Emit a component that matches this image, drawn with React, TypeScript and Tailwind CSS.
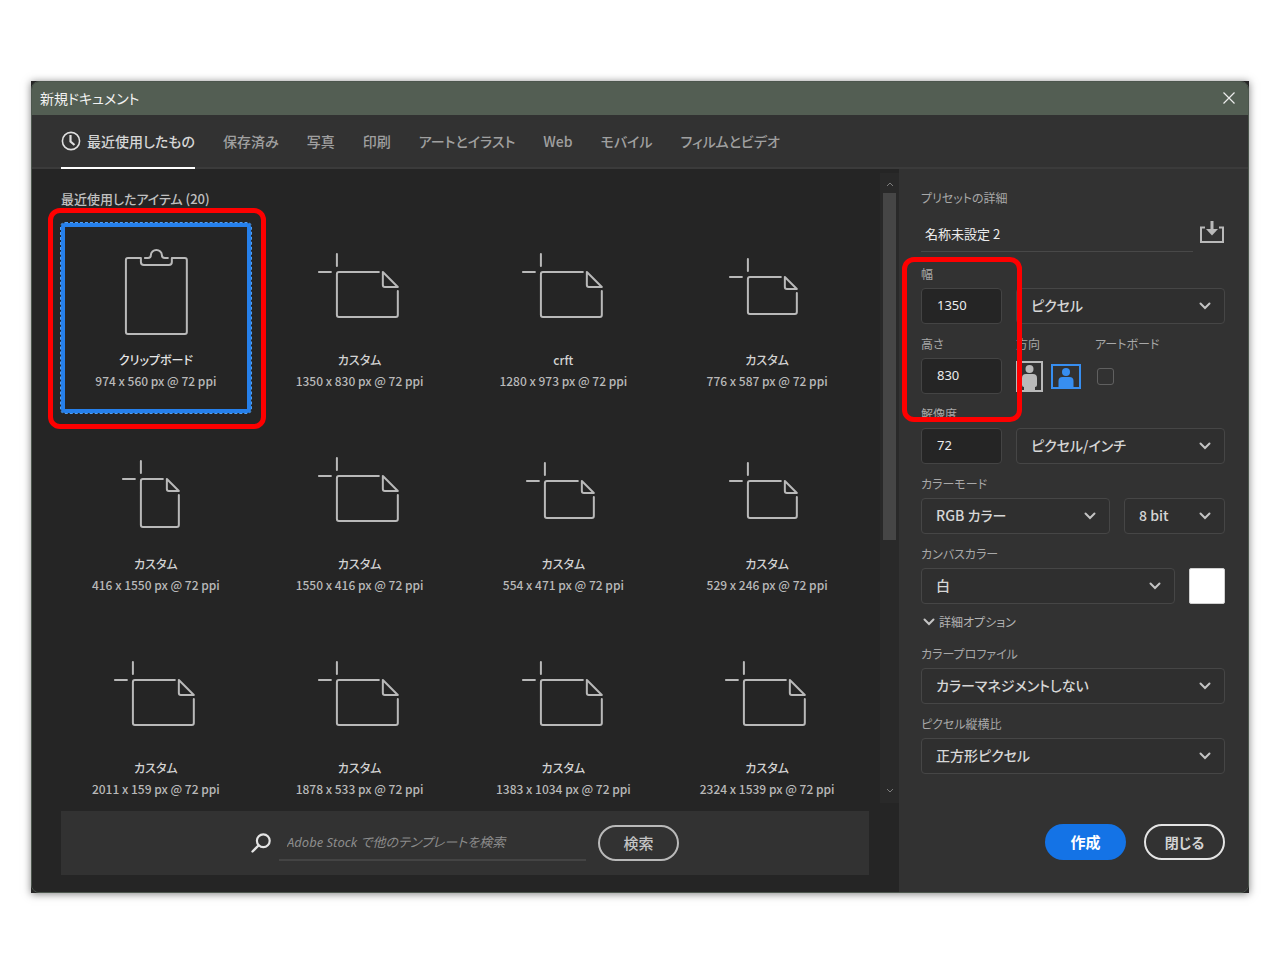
import { useState } from "react";
import type { ReactNode } from "react";

type IconKind = "clipboard" | "landscape" | "small" | "portrait";

interface Preset {
  name: string;
  size: string;
  icon: IconKind;
}

const presets: Preset[] = [
  { name: "クリップボード", size: "974 x 560 px @ 72 ppi", icon: "clipboard" },
  { name: "カスタム", size: "1350 x 830 px @ 72 ppi", icon: "landscape" },
  { name: "crft", size: "1280 x 973 px @ 72 ppi", icon: "landscape" },
  { name: "カスタム", size: "776 x 587 px @ 72 ppi", icon: "small" },
  { name: "カスタム", size: "416 x 1550 px @ 72 ppi", icon: "portrait" },
  { name: "カスタム", size: "1550 x 416 px @ 72 ppi", icon: "landscape" },
  { name: "カスタム", size: "554 x 471 px @ 72 ppi", icon: "small" },
  { name: "カスタム", size: "529 x 246 px @ 72 ppi", icon: "small" },
  { name: "カスタム", size: "2011 x 159 px @ 72 ppi", icon: "landscape" },
  { name: "カスタム", size: "1878 x 533 px @ 72 ppi", icon: "landscape" },
  { name: "カスタム", size: "1383 x 1034 px @ 72 ppi", icon: "landscape" },
  { name: "カスタム", size: "2324 x 1539 px @ 72 ppi", icon: "landscape" },
];

const tabs = [
  "最近使用したもの",
  "保存済み",
  "写真",
  "印刷",
  "アートとイラスト",
  "Web",
  "モバイル",
  "フィルムとビデオ",
];

// left, top, right, bottom, size of the folded corner
const pages = {
  landscape: [72, 49, 133, 94, 15],
  small: [76, 54, 125, 91, 12],
  portrait: [80, 52, 118, 100, 12],
};

const PresetIcon = ({ kind }: { kind: IconKind }) => {
  let d = "";
  if (kind === "clipboard") {
    d =
      "M80 35H67q-2 0-2 2V109q0 2 2 2H124q2 0 2-2V37q0-2-2-2H111V39q0 3-3 3H83q-3 0-3-3V35" +
      "M84 35H87q3 0 3-3a5.5 5 0 0 1 11 0q0 3 3 3h3";
  } else {
    const [l, t, r, b, f] = pages[kind];
    d =
      `M${l} ${t - 18}v12M${l - 18} ${t}h12` +
      `M${r - f - 4} ${t}H${l + 2}q-2 0-2 2V${b - 2}q0 2 2 2H${r - 2}q2 0 2-2V${t + f + 4}` +
      `M${r - f} ${t}V${t + f - 2}q0 2 2 2H${r}Z`;
  }
  return (
    <svg
      viewBox="0 0 190 120"
      className="h-[120px] w-full"
      fill="none"
      stroke="#b9b9b9"
      strokeWidth="2"
      strokeLinecap="round"
      strokeLinejoin="round"
      aria-hidden="true"
    >
      <path d={d} />
    </svg>
  );
};

const Chevron = ({ className = "" }: { className?: string }) => (
  <svg
    viewBox="0 0 12 8"
    className={`h-2 w-3 ${className}`}
    fill="none"
    stroke="#c4c4c4"
    strokeWidth="2"
    strokeLinecap="round"
    aria-hidden="true"
  >
    <path d="M1.5 1.5L6 6l4.5-4.5" />
  </svg>
);

const Label = ({ id, children }: { id: string; children: ReactNode }) => (
  <label htmlFor={id} className="mb-1 block h-5 text-xs leading-5 text-[#a8a8a8]">
    {children}
  </label>
);

const Select = ({
  id,
  label,
  options,
  className = "",
}: {
  id: string;
  label?: string;
  options: string[];
  className?: string;
}) => (
  <div className={`relative ${className}`}>
    <select
      id={id}
      aria-label={label}
      className="block h-9 w-full appearance-none rounded border border-[#464646] bg-[#2f2f2f] pb-0.5 pl-3.5 pr-8 text-sm font-medium text-[#d6d6d6]"
    >
      {options.map((option) => (
        <option key={option}>{option}</option>
      ))}
    </select>
    <Chevron className="pointer-events-none absolute right-3.5 top-3.5" />
  </div>
);

const NumberBox = ({ id, value }: { id: string; value: string }) => (
  <input
    id={id}
    defaultValue={value}
    className="block h-9 w-[81px] rounded border border-[#444] bg-[#252525] pb-0.5 pl-[15px] font-['Noto_Sans'] text-[13px] text-[#ececec]"
  />
);

const Details = () => (
  <aside className="flex w-[349px] shrink-0 flex-col bg-[#323232] pb-8 pl-[22px] pr-[23px] pt-[19px]">
    <h2 className="text-xs leading-5 text-[#a8a8a8]">プリセットの詳細</h2>
    <div className="mb-3 mt-2 flex items-start gap-1.5">
      <input
        aria-label="名称"
        defaultValue="名称未設定 2"
        className="h-9 min-w-0 flex-1 border-b border-[#484848] pl-1 text-[13px] text-[#ececec]"
      />
      <button aria-label="プリセットを保存" className="mt-1">
        <svg viewBox="0 0 26 24" className="h-6 w-[26px]" fill="none" stroke="#b9b9b9" strokeWidth="2">
          <path d="M6 7.500H2V22H24V7.500H20" />
          <path d="M13 1V10" strokeWidth="3" />
          <path d="M7 9H19L13 15.500Z" fill="#b9b9b9" stroke="none" />
        </svg>
      </button>
    </div>
    <div className="relative flex flex-col gap-2.5">
      <div>
        <Label id="width">幅</Label>
        <div className="flex gap-3.5">
          <NumberBox id="width" value="1350" />
          <Select id="unit" label="単位" options={["ピクセル"]} className="flex-1" />
        </div>
      </div>
      <div className="flex gap-3.5">
        <div>
          <Label id="height">高さ</Label>
          <NumberBox id="height" value="830" />
        </div>
        <div className="w-[65px]">
          <div className="mb-1 h-5 text-xs leading-5 text-[#a8a8a8]">方向</div>
          <div className="flex h-9 items-center gap-2">
            <button aria-label="縦">
              <svg viewBox="0 0 27 31" className="h-[31px] w-[27px]" fill="#b9b9b9">
                <rect x="1" y="1" width="25" height="29" fill="none" stroke="#b9b9b9" strokeWidth="2" />
                <circle cx="13.500" cy="8" r="4" />
                <path d="M6 17q0-4 4-4h7q4 0 4 4v7q0 2-2 2v4H8v-4q-2 0-2-2z" />
              </svg>
            </button>
            <button aria-label="横">
              <svg viewBox="0 0 30 25" className="h-[25px] w-[30px]" fill="#378ef0">
                <rect x="1" y="1" width="28" height="23" fill="none" stroke="#378ef0" strokeWidth="2" />
                <circle cx="15" cy="8" r="4" />
                <path d="M7.500 17q0-4 4-4h7q4 0 4 4v7H7.500z" />
              </svg>
            </button>
          </div>
        </div>
        <div>
          <Label id="artboard">アートボード</Label>
          <div className="flex h-9 items-center pl-0.5">
            <input
              id="artboard"
              type="checkbox"
              className="size-[17px] appearance-none rounded-[3px] border border-[#606060] checked:bg-[#378ef0]"
            />
          </div>
        </div>
      </div>
      <div>
        <Label id="resolution">解像度</Label>
        <div className="flex gap-3.5">
          <NumberBox id="resolution" value="72" />
          <Select id="resolution-unit" label="解像度の単位" options={["ピクセル/インチ"]} className="flex-1" />
        </div>
      </div>
      <div>
        <Label id="mode">カラーモード</Label>
        <div className="flex gap-3.5">
          <Select id="mode" options={["RGB カラー"]} className="flex-1" />
          <Select id="depth" label="ビット数" options={["8 bit"]} className="w-[101px]" />
        </div>
      </div>
      <div>
        <Label id="canvas">カンバスカラー</Label>
        <div className="flex gap-3.5">
          <Select id="canvas" options={["白"]} className="flex-1" />
          <button aria-label="カンバスカラーを選択" className="size-9 rounded-xs border border-[#d0d0d0] bg-white" />
        </div>
      </div>
      {/* annotation around the size fields */}
      <div className="pointer-events-none absolute -left-[19px] -top-[7px] h-[165px] w-[120px] rounded-xl border-5 border-[#fe0000]" />
    </div>
    <button className="mt-2 flex h-5 items-center gap-1 pl-0.5 text-xs text-[#b4b4b4]">
      <Chevron />
      詳細オプション
    </button>
    <div className="mt-3 flex flex-col gap-2.5">
      <div>
        <Label id="profile">カラープロファイル</Label>
        <Select id="profile" options={["カラーマネジメントしない"]} />
      </div>
      <div>
        <Label id="ratio">ピクセル縦横比</Label>
        <Select id="ratio" options={["正方形ピクセル"]} />
      </div>
    </div>
    <div className="mt-auto flex justify-end gap-[18px]">
      <button className="h-9 w-[81px] rounded-full bg-[#1473e6] text-[15px] font-bold text-white">作成</button>
      <button className="h-9 w-[81px] rounded-full border-2 border-[#e4e4e4] text-sm font-bold text-[#d4d4d4]">
        閉じる
      </button>
    </div>
  </aside>
);

const App = () => {
  const [tab, setTab] = useState(0);
  const [selected, setSelected] = useState(0);

  return (
    <main className="min-h-screen bg-white px-[31px] py-[81px] font-['Noto_Sans_CJK_JP',sans-serif] [font-feature-settings:'palt']">
      <div className="bg-[#262626] shadow-[0_1px_8px_rgba(0,0,0,0.5)]">
        <div className="overflow-hidden rounded-lg border border-[#4c564d] bg-[#323232]">
          <header className="-mt-px flex h-[34px] items-center justify-between bg-[#535e53] pl-2 pr-[13px]">
            <h1 className="text-sm text-[#f2f2f2]">新規ドキュメント</h1>
            <button aria-label="閉じる">
              <svg viewBox="0 0 12 12" className="size-3" stroke="#ececec" strokeWidth="1.2">
                <path d="M0.500 0.500L11.500 11.500M11.500 0.500L0.500 11.500" />
              </svg>
            </button>
          </header>

          <nav className="flex h-[54px] gap-7 border-b-2 border-[#3b3b3b] pl-[29px]">
            {tabs.map((name, i) => (
              <button
                key={name}
                onClick={() => setTab(i)}
                className={
                  i === tab
                    ? "-mb-0.5 flex items-center gap-1.5 border-b-2 border-white text-sm font-medium text-[#d6d6d6]"
                    : "-mb-0.5 flex items-center border-b-2 border-transparent text-sm font-medium text-[#a0a0a0]"
                }
              >
                {i === 0 && (
                  <svg viewBox="0 0 20 20" className="size-5" fill="none" stroke="#dedede" aria-hidden="true">
                    <circle cx="10" cy="10" r="8.600" strokeWidth="1.600" />
                    <path d="M9.500 4V10.500L13.500 14" strokeWidth="2.200" />
                  </svg>
                )}
                {name}
              </button>
            ))}
          </nav>

          <div className="flex">
            <section className="min-w-0 flex-1 bg-[#252525] pb-[17px]">
              <div className="flex h-[634px] overflow-hidden">
                <div className="min-w-0 flex-1 pl-[29px] pr-[18px] pt-5">
                  <h2 className="mb-3.5 text-[13px] font-medium leading-5 text-[#c0c0c0]">最近使用したアイテム (20)</h2>
                  <div className="grid grid-cols-4 gap-3.5">
                    {presets.map((preset, i) => (
                      <div key={i} className="relative">
                        <button
                          onClick={() => setSelected(i)}
                          className={
                            i === selected
                              ? "flex h-[190px] w-full flex-col items-center rounded-sm text-[#e6e6e6] outline-1 outline-dashed outline-[#4d9df5] ring-4 ring-inset ring-[#2680eb]"
                              : "flex h-[190px] w-full flex-col items-center text-[#d2d2d2]"
                          }
                        >
                          <PresetIcon kind={preset.icon} />
                          <span className="mt-1.5 text-xs font-medium leading-[22px]">{preset.name}</span>
                          <span className="text-xs font-medium leading-5 text-[#b9b9b9]">{preset.size}</span>
                        </button>
                        {/* annotation around the clipboard preset */}
                        {i === 0 && (
                          <div className="pointer-events-none absolute -left-[13px] -right-[15px] -bottom-4 -top-[15px] rounded-xl border-5 border-[#fe0000]" />
                        )}
                      </div>
                    ))}
                  </div>
                </div>
                <div className="mt-1 flex w-[19px] flex-col items-center bg-[#292929]">
                  <svg viewBox="0 0 8 5" className="mb-1.5 mt-[9px] h-[5px] w-2" fill="none" stroke="#7c7c7c">
                    <path d="M1 4L4 1L7 4" />
                  </svg>
                  <div className="h-[347px] w-[13px] bg-[#464646]" />
                  <svg viewBox="0 0 8 5" className="mb-2.5 mt-auto h-[5px] w-2" fill="none" stroke="#7c7c7c">
                    <path d="M1 1L4 4L7 1" />
                  </svg>
                </div>
              </div>

              <form
                onSubmit={(e) => e.preventDefault()}
                className="ml-[29px] mr-[30px] mt-2 flex h-16 items-center justify-center bg-[#323232]"
              >
                <svg viewBox="0 0 20 20" className="mr-2 size-5" fill="none" stroke="#e4e4e4" aria-hidden="true">
                  <circle cx="12.300" cy="7.700" r="6.400" strokeWidth="2.200" />
                  <path d="M7.500 12.500L1.500 18.500" strokeWidth="2.400" strokeLinecap="round" />
                </svg>
                <input
                  aria-label="テンプレートを検索"
                  placeholder="Adobe Stock で他のテンプレートを検索"
                  className="h-9 w-[307px] border-b-2 border-[#444] pl-2 font-['Noto_Sans','Noto_Sans_CJK_JP',sans-serif] text-[13px] italic text-[#dcdcdc] placeholder:text-[#8c8c8c]"
                />
                <button className="ml-3 h-9 w-[81px] rounded-full border-2 border-[#b9b9b9] text-[15px] font-medium text-[#c4c4c4]">
                  検索
                </button>
              </form>
            </section>
            <Details />
          </div>
        </div>
      </div>
    </main>
  );
};

export default App;
